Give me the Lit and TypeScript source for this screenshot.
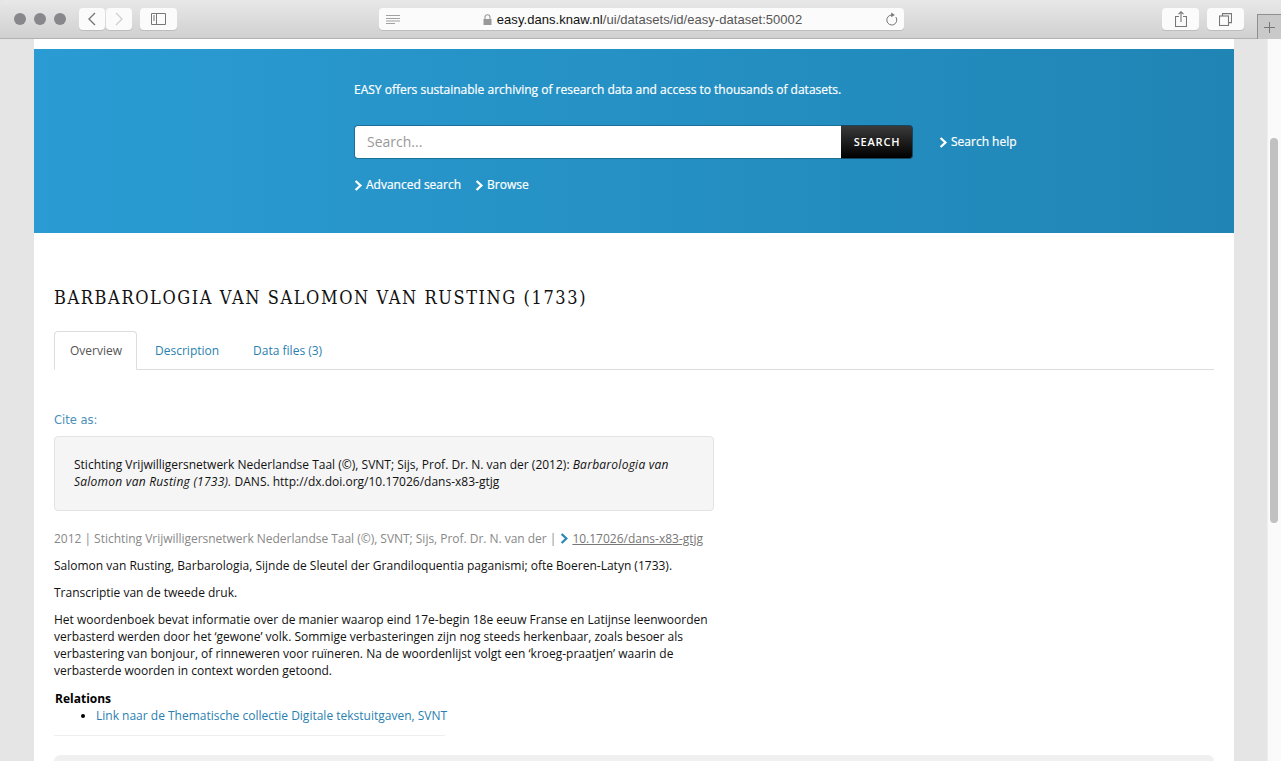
import { LitElement, html, css, svg } from "lit";
import { customElement } from "lit/decorators.js";

const chevron = svg`<path d="M1.6 1 L6.4 5.5 L1.6 10" fill="none" stroke="currentColor" stroke-width="2.3"/>`;

@customElement("app-root")
export class AppRoot extends LitElement {
  static styles = css`
    :host { display: block; width: 1281px; height: 761px; overflow: hidden; font-family: "Open Sans", sans-serif; font-size: 12px; color: #000; background: #e5e5e5; }
    * { box-sizing: border-box; }
    .bar { height: 39px; display: flex; align-items: flex-start; background: linear-gradient(#e8e8e8, #d0d0d0); border-bottom: 1px solid #b1b1b1; border-radius: 5px 5px 0 0; padding: 8px 0 0 14px; position: relative; }
    .dots { display: flex; gap: 8px; margin-top: 5px; }
    .dot { width: 12px; height: 12px; border-radius: 50%; background: #88878c; }
    .btn { height: 22px; background: #fbfbfb; border-radius: 4px; box-shadow: 0 1px 0 #bdbdbd; display: flex; align-items: center; justify-content: center; color: #777; flex: none; }
    .back { width: 26px; margin-left: 13px; }
    .fwd { width: 26px; margin-left: 1px; color: #d0d0d0; }
    .side { width: 37px; margin-left: 8px; }
    .url { width: 525px; margin-left: 202px; justify-content: space-between; padding: 0 6px 0 7px; }
    .addr { display: flex; align-items: center; gap: 5px; font-family: "Liberation Sans", sans-serif; font-size: 13px; letter-spacing: 0.04px; color: #555; }
    .addr b { font-weight: 400; color: #111; }
    .share { width: 37px; margin-left: 258px; }
    .tabs-btn { width: 37px; margin-left: 8px; }
    .plus { width: 24px; height: 25px; margin: 6px 0 0 13px; border: 1px solid #8f8f8f; border-right: 0; border-bottom: 0; background: #c9c9c9; display: flex; align-items: center; justify-content: center; color: #777; }
    .view { display: flex; height: 722px; }
    .gutter { flex: none; width: 34px; }
    .gutter.r { width: 33px; }
    .page { flex: none; width: 1200px; height: 722px; background: #fff; padding-top: 10px; overflow: hidden; }
    .scroll { flex: none; width: 14px; background: #fafafa; border-left: 1px solid #efefef; padding: 99px 0 0 2px; }
    .thumb { width: 8px; height: 385px; background: #c1c1c1; border-radius: 4px; }
    .hero { height: 184px; background: linear-gradient(to right, #2a9cd3, #2085b5); color: #fff; padding: 32px 0 0 320px; }
    .tag { font-size: 12px; line-height: 18px; -webkit-text-stroke: 0.2px #fff; }
    .searchrow { display: flex; align-items: center; margin-top: 26px; }
    .input { width: 487px; height: 34px; background: #fff; border: 1px solid #1c6f97; border-right: 0; border-radius: 4px 0 0 4px; color: #999; font-size: 14px; line-height: 32px; padding-left: 12px; }
    .go { width: 72px; height: 34px; background: linear-gradient(#3a3a3a, #000); border: 1px solid #17465e; border-left: 0; border-radius: 0 4px 4px 0; color: #fff; font-weight: 600; font-size: 11px; letter-spacing: 0.8px; line-height: 32px; text-align: center; padding-left: 1px; }
    .lnk { display: inline-flex; align-items: center; gap: 3px; font-size: 12px; line-height: 18px; color: #fff; -webkit-text-stroke: 0.2px #fff; }
    .lnk svg { flex: none; }
    .help { margin-left: 26px; }
    .sub { display: flex; gap: 14px; margin-top: 17px; }
    .body { padding: 55px 20px 0; }
    h1 { margin: 0; font-family: "DejaVu Serif Condensed", "DejaVu Serif", serif; font-stretch: condensed; font-weight: 400; font-size: 18px; line-height: 20px; letter-spacing: 1.6px; color: #111; }
    .tabs { display: flex; margin-top: 23px; height: 39px; border-bottom: 1px solid #ddd; }
    .tab { height: 38px; padding: 0 15px; line-height: 37px; color: #2a7fb0; margin-right: 2px; border: 1px solid transparent; }
    .tab.on { height: 39px; padding-right: 14px; background: #fff; color: #555; border-color: #ddd; border-bottom-color: #fff; border-radius: 4px 4px 0 0; }
    .cite { width: 660px; }
    .cite-lab { margin-top: 41px; line-height: 18px; font-family: "DejaVu Sans", sans-serif; font-size: 11.5px; color: #4a90b8; }
    .well { margin-top: 7px; height: 75px; background: #f5f5f5; border: 1px solid #e3e3e3; border-radius: 4px; padding: 19px; line-height: 17px; color: #111; }
    .well i { letter-spacing: 0.25px; }
    .meta { margin-top: 19px; line-height: 17px; color: #888; white-space: nowrap; display: flex; align-items: center; gap: 4px; }
    .meta span { letter-spacing: -0.025px; }
    .meta u { color: #777; }
    .meta svg { color: #2a87b5; flex: none; }
    p { margin: 10px 0 0; line-height: 17px; color: #111; }
    .rel { margin: 11px 0 0 1px; font-weight: 700; line-height: 17px; }
    ul { margin: 0; padding: 0 0 0 42px; line-height: 17px; }
    a { color: #2a7fb0; text-decoration: none; }
    .rule { width: 391px; height: 1px; background: #eee; margin-top: 11px; }
    .next { height: 40px; margin-top: 19px; background: #f0f0f0; border-radius: 6px; }
  `;

  render() {
    const chev = (w = 9) => html`<svg width=${w} height="11" viewBox="0 0 ${w} 11">${chevron}</svg>`;
    return html`
      <div class="bar">
        <div class="dots"><span class="dot"></span><span class="dot"></span><span class="dot"></span></div>
        <div class="btn back"><svg width="10" height="14" viewBox="0 0 10 14"><path d="M8 1 L2 7 L8 13" fill="none" stroke="currentColor" stroke-width="1.4"/></svg></div>
        <div class="btn fwd"><svg width="10" height="14" viewBox="0 0 10 14"><path d="M2 1 L8 7 L2 13" fill="none" stroke="currentColor" stroke-width="1.4"/></svg></div>
        <div class="btn side"><svg width="15" height="12" viewBox="0 0 15 12"><path d="M.5.5h14v11H.5zM5.5.5v11" fill="none" stroke="currentColor"/><path d="M2 3h2M2 5h2M2 7h2" stroke="currentColor"/></svg></div>
        <div class="btn url">
          <svg width="14" height="9" viewBox="0 0 14 9"><path d="M0 .5h14M0 3.5h14M0 6h14M0 8.5h9" stroke="#8a8a8a" stroke-width=".8"/></svg>
          <div class="addr">
            <svg width="9" height="11" viewBox="0 0 9 11"><path d="M2 5V3.2a2.5 2.5 0 0 1 5 0V5" fill="none" stroke="#999" stroke-width="1.1"/><rect x=".5" y="5" width="8" height="6" fill="#999"/></svg>
            <span><b>easy.dans.knaw.nl</b>/ui/datasets/id/easy-dataset:50002</span>
          </div>
          <svg width="13" height="14" viewBox="0 0 13 14"><path d="M10.8 5A5 5 0 1 1 7 3" fill="none" stroke="#777" stroke-width="1"/><path d="M6.2.5 9.8 3 6.2 5.2z" fill="#777"/></svg>
        </div>
        <div class="btn share"><svg width="12" height="16" viewBox="0 0 12 16"><path d="M4 5.5H.5v10h11v-10H8M6 11V1M3.5 3.2 6 .8l2.5 2.4" fill="none" stroke="currentColor" stroke-width="1.1"/></svg></div>
        <div class="btn tabs-btn"><svg width="13" height="13" viewBox="0 0 13 13"><rect x=".5" y="3" width="9" height="9.5" fill="none" stroke="currentColor" stroke-width="1.1"/><path d="M3.5 3V.6h9v9H10" fill="none" stroke="currentColor" stroke-width="1.1"/></svg></div>
        <div class="plus"><svg width="11" height="11" viewBox="0 0 11 11"><path d="M5.5 0v11M0 5.5h11" stroke="currentColor"/></svg></div>
      </div>
      <div class="view">
        <div class="gutter"></div>
        <div class="page">
          <div class="hero">
            <div class="tag">EASY offers sustainable archiving of research data and access to thousands of datasets.</div>
            <div class="searchrow">
              <div class="input">Search...</div>
              <div class="go">SEARCH</div>
              <span class="lnk help">${chev()}Search help</span>
            </div>
            <div class="sub">
              <span class="lnk">${chev()}Advanced search</span>
              <span class="lnk">${chev()}Browse</span>
            </div>
          </div>
          <div class="body">
            <h1>BARBAROLOGIA VAN SALOMON VAN RUSTING (1733)</h1>
            <div class="tabs">
              <div class="tab on">Overview</div>
              <div class="tab">Description</div>
              <div class="tab">Data files (3)</div>
            </div>
            <div class="cite">
              <div class="cite-lab">Cite as:</div>
              <div class="well">Stichting Vrijwilligersnetwerk Nederlandse Taal (©), SVNT; Sijs, Prof. Dr. N. van der (2012): <i>Barbarologia van Salomon van Rusting (1733).</i> DANS. http://dx.doi.org/10.17026/dans-x83-gtjg</div>
              <div class="meta"><span>2012 | Stichting Vrijwilligersnetwerk Nederlandse Taal (©), SVNT; Sijs, Prof. Dr. N. van der |</span>${chev(8)}<u>10.17026/dans-x83-gtjg</u></div>
              <p>Salomon van Rusting, Barbarologia, Sijnde de Sleutel der Grandiloquentia paganismi; ofte Boeren-Latyn (1733).</p>
              <p>Transcriptie van de tweede druk.</p>
              <p>Het woordenboek bevat informatie over de manier waarop eind 17e-begin 18e eeuw Franse en Latijnse leenwoorden verbasterd werden door het ‘gewone’ volk. Sommige verbasteringen zijn nog steeds herkenbaar, zoals besoer als verbastering van bonjour, of rinneweren voor ruïneren. Na de woordenlijst volgt een ‘kroeg-praatjen’ waarin de verbasterde woorden in context worden getoond.</p>
              <div class="rel">Relations</div>
              <ul><li><a>Link naar de Thematische collectie Digitale tekstuitgaven, SVNT</a></li></ul>
              <div class="rule"></div>
            </div>
            <div class="next"></div>
          </div>
        </div>
        <div class="gutter r"></div>
        <div class="scroll"><div class="thumb"></div></div>
      </div>
    `;
  }
}
